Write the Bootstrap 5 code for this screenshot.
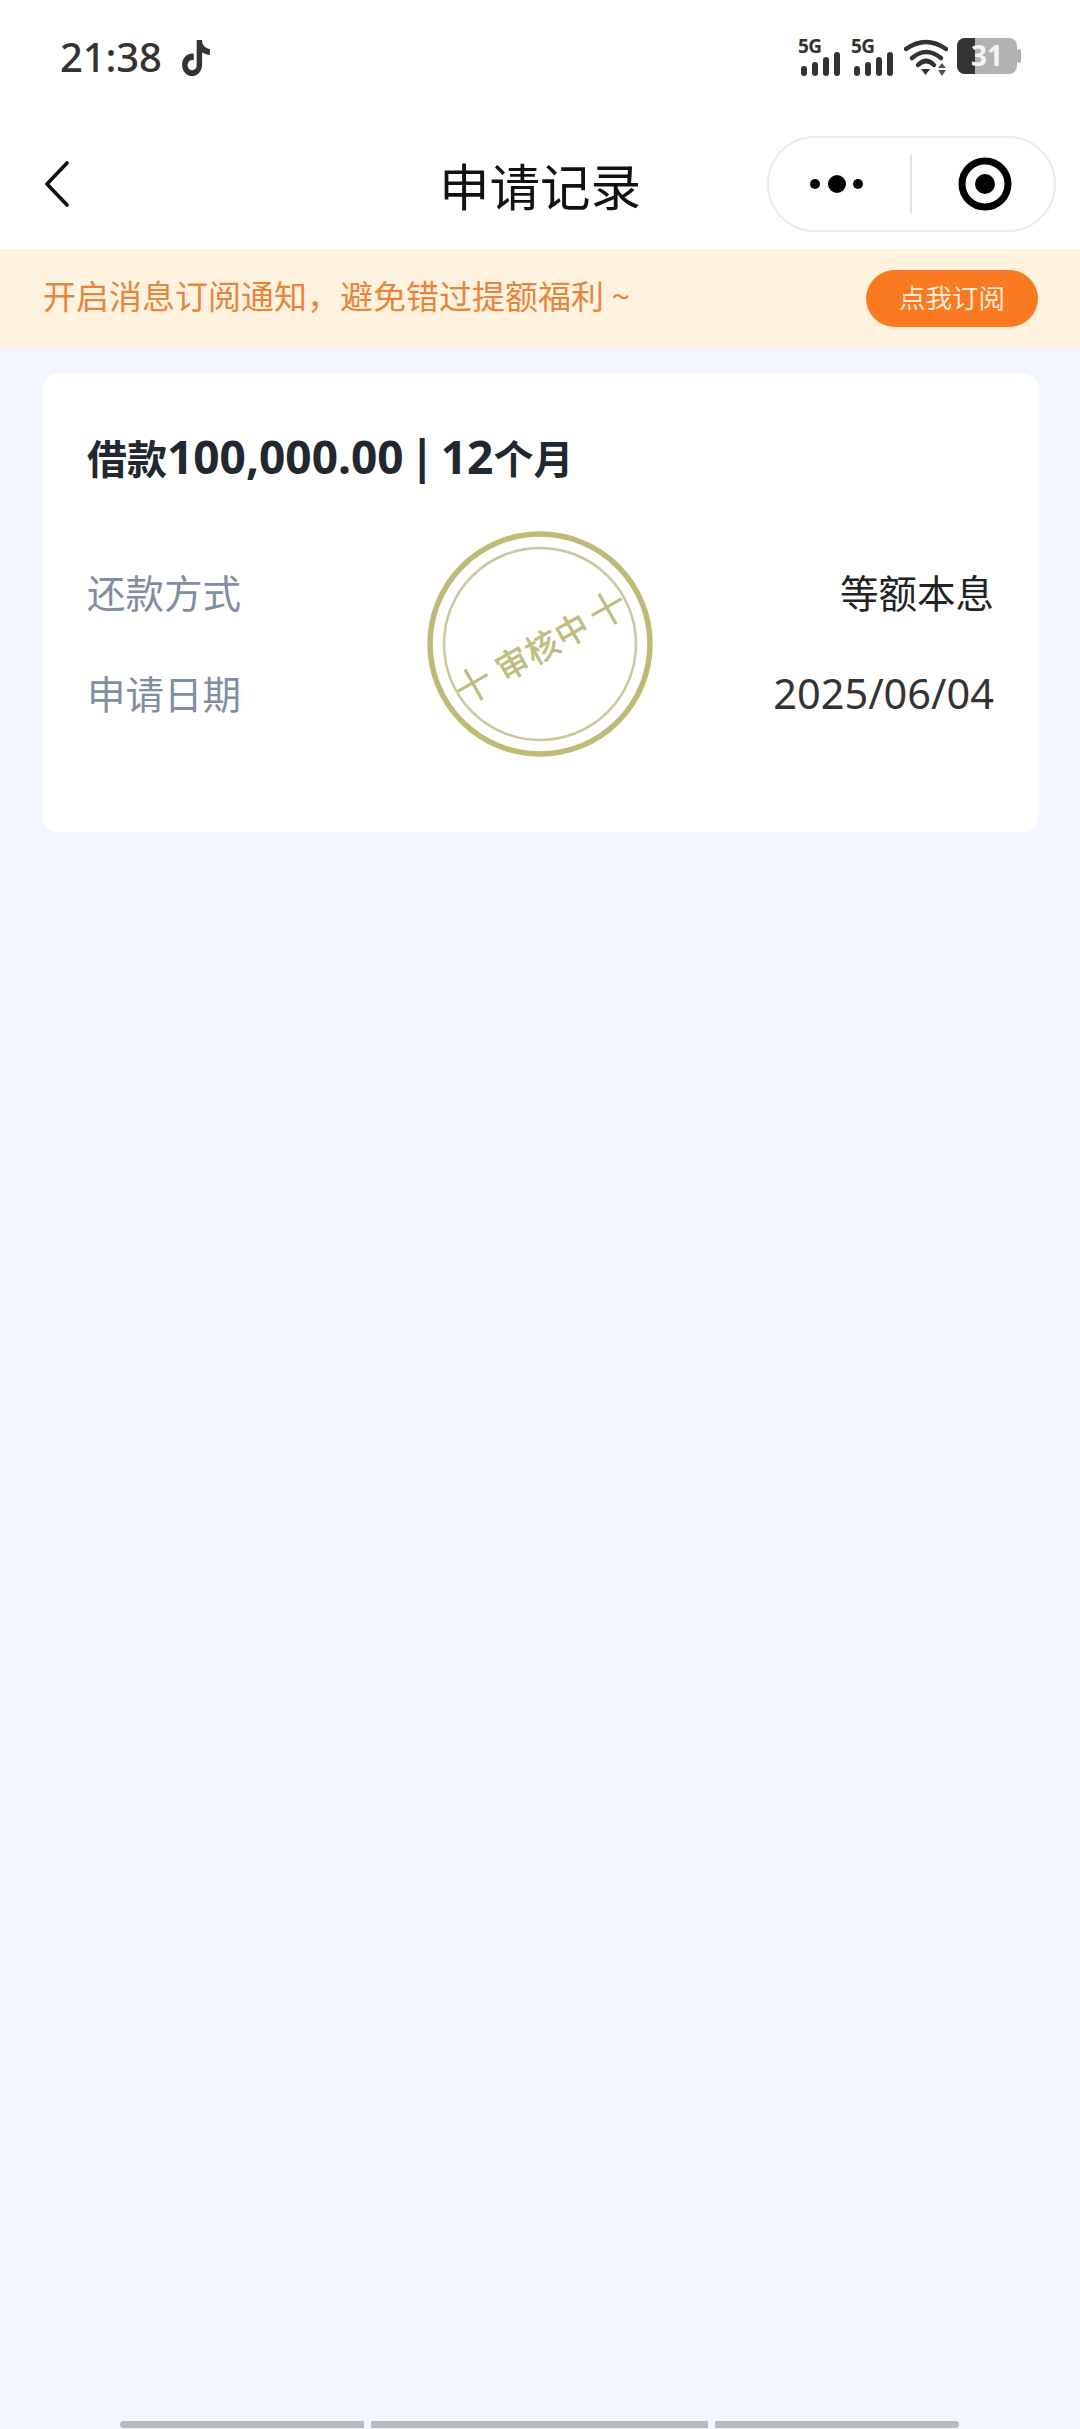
<!DOCTYPE html>
<html lang="zh">
<head>
<meta charset="utf-8">
<title>申请记录</title>
<link href="https://cdn.jsdelivr.net/npm/bootstrap@5.3.0/dist/css/bootstrap.min.css" rel="stylesheet">
<style>
html,body{margin:0;height:100%}
body{font-family:"Noto Sans","Noto Sans CJK SC",sans-serif;background:#f2f6fe;color:#222}
.app-page{height:2429px;overflow:hidden}
.top-white{background:#fff}
.status-row{height:87px;padding:0 58px 0 60px}
.clock{font-family:"Noto Sans",sans-serif;font-size:40px;font-weight:500;color:#333;line-height:1;margin-top:37px;letter-spacing:-.1px}
.tt-icon{width:32px;height:36px;margin-left:18px;margin-top:40px}
.status-icons{gap:9px;margin-top:32px}
.title-row{height:162px;padding:49px 24px 17px 24px;display:grid;grid-template-columns:1fr auto 1fr;align-items:center}
.back-mark{margin-left:21px}
.page-title{font-family:"Noto Sans CJK SC",sans-serif;font-size:50.500px;line-height:1;color:#111}
.mini-capsule{width:289px;height:96px;border:2px solid #ebebeb;border-radius:48px;justify-self:end}
.capsule-side{flex:1 1 0}
.capsule-sep{width:2px;height:58px;background:#e2e2e2;margin-left:3px;margin-right:-3px}
.notice-bar{height:99px;background:#fff3e0;padding:0 42px 0 43px}
.notice-text{font-family:"Noto Sans CJK SC",sans-serif;font-size:33px;color:#e8853c;line-height:1;margin-top:-7px}
.notice-btn{--bs-btn-bg:#fa7a22;--bs-btn-color:#fdebd8;--bs-btn-border-color:#fa7a22;--bs-btn-padding-x:0;--bs-btn-padding-y:0;--bs-btn-font-size:26.500px;width:172px;height:57px;border-radius:29px;font-family:"Noto Sans CJK SC",sans-serif;line-height:1;padding-bottom:3px}
.record-card{margin:26px 42px 0 43px;height:458px;border:0;border-radius:14px;background:#fff;padding:0 44px}
.record-title{font-family:"Noto Sans",sans-serif;font-size:46px;font-weight:700;color:#212830;line-height:1;margin-top:59px;margin-bottom:0;word-spacing:-6px}
.title-cjk{font-family:"Noto Sans CJK SC",sans-serif;font-size:40px}
.info-row{font-family:"Noto Sans CJK SC",sans-serif;font-size:38.500px;line-height:1;height:40px}
.info-row.first{margin-top:92px}
.info-row.second{margin-top:61px}
.info-label{color:#7f8ea3}
.info-value{color:#222}
.info-date{font-family:"Noto Sans",sans-serif;font-size:41.500px;color:#333;margin-top:4px}
.stamp-mark{position:absolute;left:382px;top:150px;width:230px;height:240px}
.stamp-mark text{font-family:"Noto Sans CJK SC",sans-serif;fill:#bfbd7e}
.home-bars{gap:7px;padding:0 120px;height:7px;margin-bottom:1px;margin-top:auto}
.home-seg{height:7px;background:#b8babe}
.seg-a{width:244px;border-radius:4px 0 0 4px}
.seg-b{width:337px}
.seg-c{width:244px;border-radius:0 4px 4px 0}
</style>
</head>
<body>
<div class="app-page d-flex flex-column">
  <div class="top-white">
    <div class="status-row d-flex align-items-start justify-content-between">
      <div class="d-flex align-items-start">
        <span class="clock">21:38</span>
        <svg class="tt-icon" viewBox="0 0 24 24" preserveAspectRatio="none" fill="#333"><path d="M12.525.02c1.31-.02 2.61-.01 3.91-.02.08 1.53.63 3.09 1.75 4.17 1.12 1.11 2.7 1.62 4.24 1.79v4.03c-1.44-.05-2.89-.35-4.2-.97-.57-.26-1.1-.59-1.62-.93-.01 2.92.01 5.84-.02 8.75-.08 1.4-.54 2.79-1.35 3.94-1.31 1.92-3.58 3.17-5.91 3.21-1.43.08-2.86-.31-4.08-1.03-2.02-1.19-3.44-3.37-3.65-5.71-.02-.5-.03-1-.01-1.49.18-1.9 1.12-3.72 2.58-4.96 1.66-1.44 3.98-2.13 6.15-1.72.02 1.48-.04 2.96-.04 4.44-.99-.32-2.15-.23-3.02.37-.63.41-1.11 1.04-1.36 1.75-.21.51-.15 1.07-.14 1.61.24 1.64 1.82 3.02 3.5 2.87 1.12-.01 2.19-.66 2.77-1.61.19-.33.4-.67.41-1.06.1-1.79.06-3.57.07-5.36.01-4.03-.01-8.05.02-12.07z"/></svg>
      </div>
      <div class="status-icons d-flex align-items-start">
        <svg width="44" height="44" viewBox="0 -6 44 44" fill="#333"><text x="0" y="15" font-family="Noto Sans" font-weight="700" font-size="19" letter-spacing="-.5">5G</text><rect x="3" y="28" width="6" height="10" rx="3"/><rect x="14" y="24" width="6" height="14" rx="3"/><rect x="25" y="19" width="6" height="19" rx="3"/><rect x="36" y="14" width="6" height="24" rx="3"/></svg>
        <svg width="44" height="44" viewBox="0 -6 44 44" fill="#333"><text x="0" y="15" font-family="Noto Sans" font-weight="700" font-size="19" letter-spacing="-.5">5G</text><rect x="3" y="28" width="6" height="10" rx="3"/><rect x="14" y="24" width="6" height="14" rx="3"/><rect x="25" y="19" width="6" height="19" rx="3"/><rect x="36" y="14" width="6" height="24" rx="3"/></svg>
        <svg width="44" height="44" viewBox="0 -6 44 44" fill="none" stroke="#333" stroke-width="4.500" stroke-linecap="round"><path d="M2 11Q22-3 42 11"/><path d="M8 20Q22 8 37 20"/><path d="M14 27Q22 19 30 27"/><path d="M17 31h9l-4.500 6z" fill="#333" stroke="none"/><path d="M38 25l4 5h-8zM38 38l-4-6h8z" fill="#555" stroke="none"/></svg>
        <svg width="65" height="44" viewBox="0 -6 65 44"><rect x="0" y="0" width="60" height="36" rx="8" fill="#b2b2b2"/><path d="M8 0h10v36H8a8 8 0 0 1-8-8V8a8 8 0 0 1 8-8z" fill="#333"/><rect x="60" y="11" width="4" height="14" rx="2" fill="#b2b2b2"/><text x="30" y="28" text-anchor="middle" font-family="Noto Sans" font-weight="700" font-size="28" fill="#f4f4f4">31</text></svg>
      </div>
    </div>
    <div class="title-row">
      <div class="back-mark">
        <svg width="24" height="46" viewBox="0 0 24 46" fill="none" stroke="#111" stroke-width="3.600" stroke-linecap="round" stroke-linejoin="round"><path d="M22 2 2 23l20 21"/></svg>
      </div>
      <div class="page-title">申请记录</div>
      <div class="mini-capsule d-flex align-items-center">
        <div class="capsule-side d-flex justify-content-center">
          <svg width="60" height="20" viewBox="0 0 60 20" fill="#000"><circle cx="7" cy="10" r="5"/><circle cx="29" cy="10" r="9"/><circle cx="50" cy="10" r="5"/></svg>
        </div>
        <div class="capsule-sep"></div>
        <div class="capsule-side d-flex justify-content-center ps-2">
          <svg width="54" height="54" viewBox="0 0 54 54"><circle cx="27" cy="27" r="23" fill="none" stroke="#000" stroke-width="7"/><circle cx="27" cy="27" r="10" fill="#000"/></svg>
        </div>
      </div>
    </div>
  </div>
  <div class="notice-bar d-flex align-items-center justify-content-between">
    <span class="notice-text">开启消息订阅通知，避免错过提额福利 ~</span>
    <button type="button" class="btn notice-btn">点我订阅</button>
  </div>
  <div class="card record-card position-relative">
    <h2 class="record-title"><span class="title-cjk">借款</span>100,000.00 | 12<span class="title-cjk">个月</span></h2>
    <div class="info-row first d-flex justify-content-between align-items-center">
      <span class="info-label">还款方式</span><span class="info-value">等额本息</span>
    </div>
    <div class="info-row second d-flex justify-content-between align-items-center">
      <span class="info-label">申请日期</span><span class="info-date">2025/06/04</span>
    </div>
    <svg class="stamp-mark" viewBox="0 0 230 240">
      <circle cx="115" cy="120" r="110" fill="none" stroke="#bebb77" stroke-width="5.500"/>
      <circle cx="115" cy="120" r="96" fill="none" stroke="#c8c89c" stroke-width="2.500"/>
      <g transform="rotate(-29.500 115 120)">
        <text x="116" y="136" text-anchor="middle" font-size="33" letter-spacing="1" stroke="#bfbd7e" stroke-width=".6">审核中</text>
        <text x="0" y="0" text-anchor="middle" font-size="38" transform="translate(37 137)">十</text>
        <text x="0" y="0" text-anchor="middle" font-size="38" transform="translate(191 137)">十</text>
      </g>
    </svg>
  </div>
  <div class="home-bars d-flex">
    <div class="home-seg seg-a"></div>
    <div class="home-seg seg-b"></div>
    <div class="home-seg seg-c"></div>
  </div>
</div>
<script src="https://cdn.jsdelivr.net/npm/bootstrap@5.3.0/dist/js/bootstrap.bundle.min.js"></script>
</body>
</html>
